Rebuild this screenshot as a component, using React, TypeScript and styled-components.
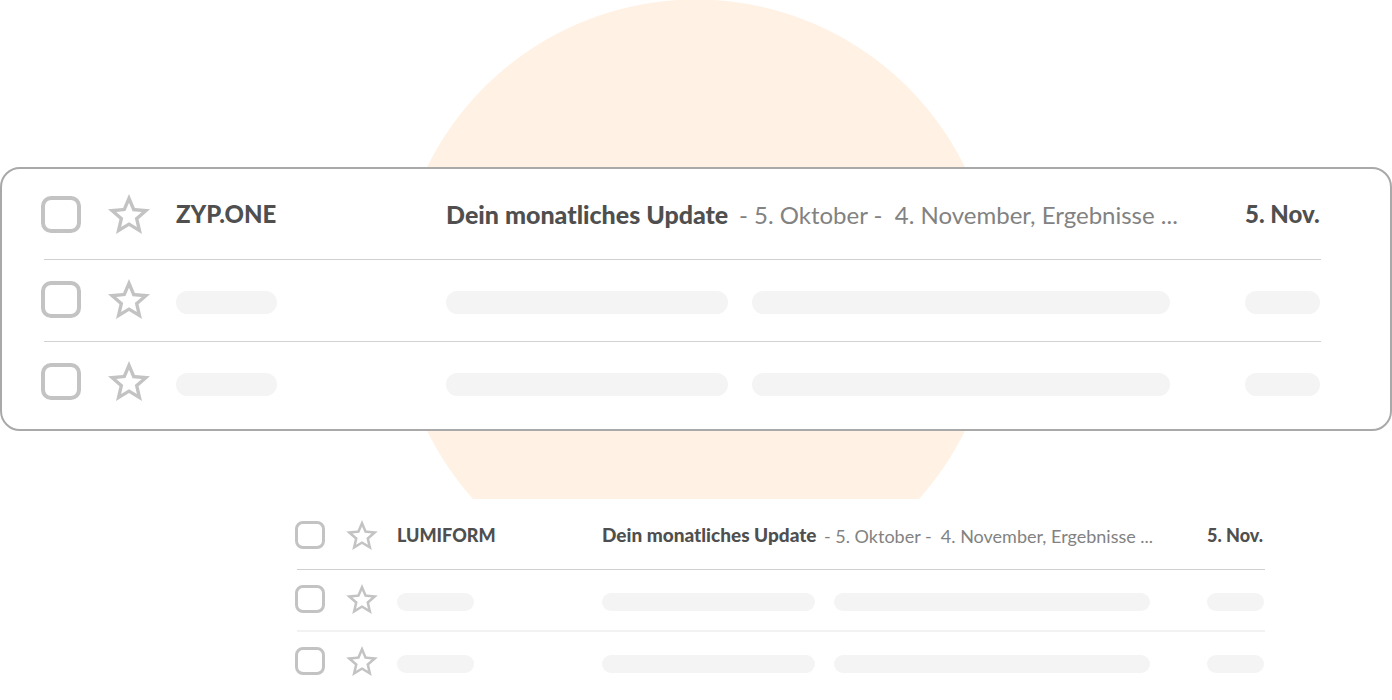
import React from "react";
import styled, { ThemeProvider, createGlobalStyle } from "styled-components";

interface ListTheme {
  columns: string;
  margin: string;
  fontSize: number;
  subjectSize: number;
  box: { width: number; height: number; border: number; radius: number };
  star: { width: number; height: number };
  mailPadding: string;
  skeletonPadding: string;
  pill: { height: number; margin: string; indent: number };
  pillWidths: [number, number, number, number];
  divider: { inset: number; last: string };
}

const large: ListTheme = {
  columns: "67px 68px minmax(0, 270fr) 293px minmax(0, 506fr) 76px",
  margin: "0 69px 0 39px",
  fontSize: 24,
  subjectSize: 25,
  box: { width: 40, height: 37, border: 4, radius: 10 },
  star: { width: 42, height: 40 },
  mailPadding: "25px 0",
  skeletonPadding: "19px 0 22px",
  pill: { height: 23, margin: "12px 0 5px", indent: 13 },
  pillWidths: [101, 282, 418, 75],
  divider: { inset: 3, last: "1px solid #d2d2d2" },
};

const small: ListTheme = {
  columns: "51px 51px minmax(0, 205fr) 222px minmax(0, 383fr) 58px",
  margin: "0 127px 0 295px",
  fontSize: 18,
  subjectSize: 19,
  box: { width: 30, height: 28, border: 3, radius: 8 },
  star: { width: 32, height: 30 },
  mailPadding: "21px 0 19px",
  skeletonPadding: "14px 0 16px",
  pill: { height: 18, margin: "8px 0 2px", indent: 10 },
  pillWidths: [77, 213, 316, 57],
  divider: { inset: 2, last: "2px solid #f2f2f2" },
};

const GlobalStyle = createGlobalStyle`
  * { box-sizing: border-box; }
  body {
    margin: 0;
    background: #fff;
    font-family: Lato, "Liberation Sans", sans-serif;
  }
`;

const Hero = styled.section`
  padding: 167px 0 68px;
  background: radial-gradient(
    circle at 50% 299px,
    #fff2e4 299px,
    rgba(255, 242, 228, 0) 300px
  );
`;

const Card = styled.div`
  padding-bottom: 6px;
  border: 2px solid #a9a9a9;
  border-radius: 20px;
  background: #fff;
`;

const List = styled.ul<{ theme: ListTheme }>`
  margin: ${(p) => p.theme.margin};
  padding: 0;
  list-style: none;
  font-size: ${(p) => p.theme.fontSize}px;
  line-height: 28px;
`;

const Row = styled.li<{ theme: ListTheme; $skeleton?: boolean }>`
  display: grid;
  grid-template-columns: ${(p) => p.theme.columns};
  align-items: center;
  padding: ${(p) => (p.$skeleton ? p.theme.skeletonPadding : p.theme.mailPadding)};
`;

const Tick = styled.input<{ theme: ListTheme }>`
  appearance: none;
  width: ${(p) => p.theme.box.width}px;
  height: ${(p) => p.theme.box.height}px;
  margin: 0;
  border: ${(p) => p.theme.box.border}px solid #c3c3c3;
  border-radius: ${(p) => p.theme.box.radius}px;
  background: #fff;
  cursor: pointer;

  &:checked {
    background: #c3c3c3;
  }
`;

const StarButton = styled.button<{ theme: ListTheme }>`
  display: flex;
  width: ${(p) => p.theme.star.width}px;
  height: ${(p) => p.theme.star.height}px;
  padding: 0;
  border: 0;
  background: none;
  color: #c3c3c3;
  cursor: pointer;
`;

const Strong = styled.span`
  color: #4f4f4f;
  font-weight: 900;
  white-space: nowrap;
`;

const Subject = styled(Strong)<{ theme: ListTheme }>`
  font-size: ${(p) => p.theme.subjectSize}px;
`;

const Snippet = styled.span`
  padding-top: 2px;
  color: #828282;
  white-space: pre;
`;

const Pill = styled.span<{ theme: ListTheme; $width: number; $indent?: boolean }>`
  width: ${(p) => p.$width}px;
  max-width: 100%;
  height: ${(p) => p.theme.pill.height}px;
  margin: ${(p) => p.theme.pill.margin};
  margin-left: ${(p) => (p.$indent ? p.theme.pill.indent : 0)}px;
  border-radius: 12px;
  background: #f4f4f4;
`;

const Divider = styled.li<{ theme: ListTheme; $last?: boolean }>`
  margin-left: ${(p) => p.theme.divider.inset}px;
  border-top: ${(p) => (p.$last ? p.theme.divider.last : "1px solid #d0d0d0")};
`;

function Star({ label }: { label: string }) {
  return (
    <StarButton type="button" aria-label={label}>
      <svg viewBox="2 2 20 19" width="100%" height="100%" fill="currentColor" aria-hidden="true">
        <path d="M22 9.24l-7.19-.62L12 2 9.19 8.63 2 9.24l5.46 4.73L5.82 21 12 17.27 18.18 21l-1.63-7.03L22 9.24zM12 15.4l-3.76 2.27 1-4.28-3.32-2.88 4.38-.38L12 6.1l1.71 4.04 4.38.38-3.32 2.88 1 4.28L12 15.4z" />
      </svg>
    </StarButton>
  );
}

function SkeletonRow({ widths }: { widths: ListTheme["pillWidths"] }) {
  return (
    <Row $skeleton>
      <Tick type="checkbox" aria-label="Nachricht auswählen" />
      <Star label="Markieren" />
      <Pill $width={widths[0]} />
      <Pill $width={widths[1]} />
      <Pill $width={widths[2]} $indent />
      <Pill $width={widths[3]} />
    </Row>
  );
}

function Inbox({ size, sender }: { size: ListTheme; sender: string }) {
  return (
    <ThemeProvider theme={size}>
      <List>
        <Row>
          <Tick type="checkbox" aria-label={`${sender} auswählen`} />
          <Star label={`${sender} markieren`} />
          <Strong>{sender}</Strong>
          <Subject>Dein monatliches Update</Subject>
          <Snippet>{"- 5. Oktober -  4. November, Ergebnisse ..."}</Snippet>
          <Strong>5. Nov.</Strong>
        </Row>
        <Divider role="separator" />
        <SkeletonRow widths={size.pillWidths} />
        <Divider role="separator" $last />
        <SkeletonRow widths={size.pillWidths} />
      </List>
    </ThemeProvider>
  );
}

export default function App() {
  return (
    <main>
      <GlobalStyle />
      <Hero>
        <Card>
          <Inbox size={large} sender="ZYP.ONE" />
        </Card>
      </Hero>
      <Inbox size={small} sender="LUMIFORM" />
    </main>
  );
}
